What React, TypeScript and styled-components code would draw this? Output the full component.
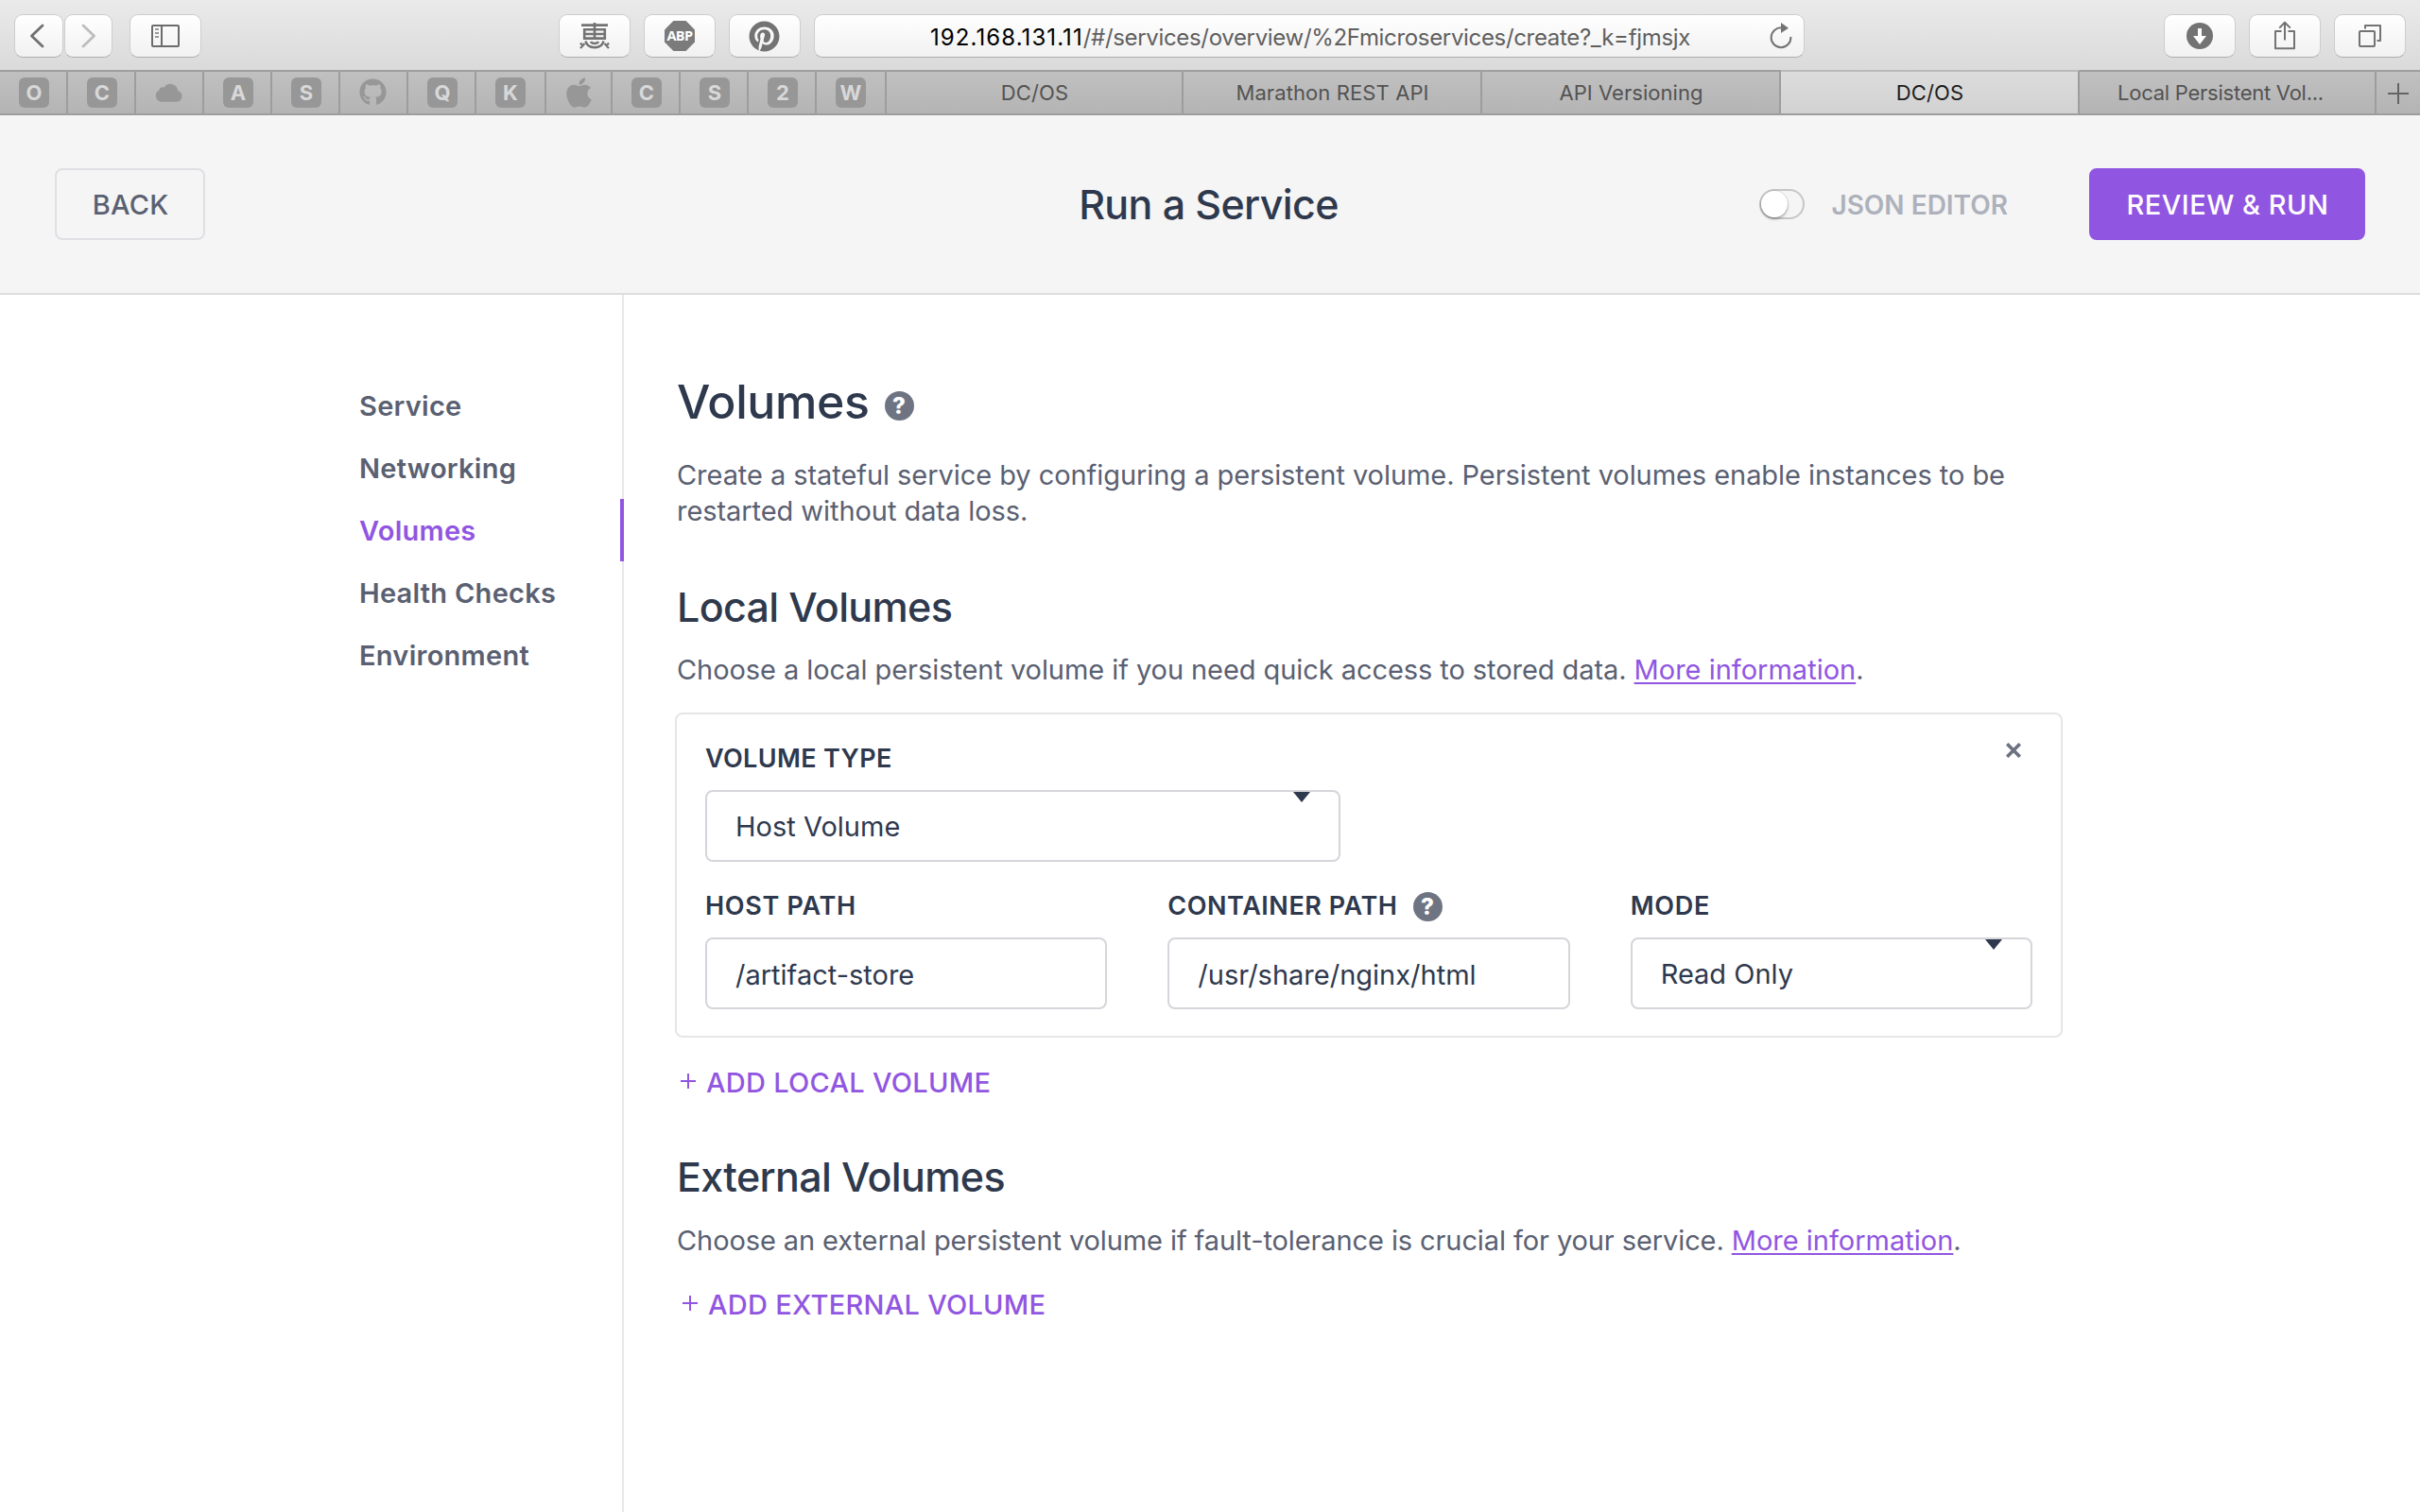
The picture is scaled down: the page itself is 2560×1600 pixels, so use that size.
import React from "react";
import styled, { createGlobalStyle, css } from "styled-components";
import { FaApple, FaGithub, FaPinterest } from "react-icons/fa";

const color = {
  ink: "#2f394d",
  body: "#5a6071",
  purple: "#9156e1",
  muted: "#adb1bb",
  field: "#d5d6db",
  glyph: "#737373",
  pin: "#979797",
};

const GlobalStyle = createGlobalStyle`
  * { box-sizing: border-box; }
  html, body { margin: 0; background: #fff; }
  body { font-family: Inter, "Noto Sans CJK JP", sans-serif; color: ${color.ink}; }
`;

const Window = styled.div`
  display: flex;
  flex-direction: column;
  width: 2560px;
  height: 1600px;
  overflow: hidden;
`;

/* ---------- Browser chrome ---------- */

const Toolbar = styled.div`
  display: flex;
  flex: none;
  height: 74px;
  padding: 15px 15px 0;
  background: linear-gradient(#eaeaea, #dadada);
`;

const ButtonGroup = styled.div<{ $gap: number; $before?: number; $end?: boolean }>`
  display: flex;
  gap: ${(p) => p.$gap}px;
  margin-left: ${(p) => (p.$end ? "auto" : `${p.$before ?? 0}px`)};
`;

const chromeSurface = css`
  height: 46px;
  border: 1px solid #cdcdcd;
  border-bottom-color: #adadad;
  border-radius: 9px;
  background: linear-gradient(#fff, #f1f1f1);
`;

const ChromeButton = styled.button<{ $width?: number; $nudge?: number }>`
  ${chromeSurface}
  display: flex;
  align-items: center;
  justify-content: center;
  width: ${(p) => p.$width ?? 76}px;
  padding: 0 ${(p) => p.$nudge ?? 0}px 0 0;
  color: ${color.glyph};
`;

const AddressBar = styled.div`
  ${chromeSurface}
  display: flex;
  align-items: center;
  justify-content: space-between;
  width: 1048px;
  margin-left: 14px;
  padding: 0 11px 0 122px;
`;

const Url = styled.div`
  padding-top: 3px;
  font-size: 24px;
  line-height: 30px;
  white-space: nowrap;
  letter-spacing: -0.33px;
  color: #5f5f5f;
`;

const Host = styled.span`
  letter-spacing: 1.08px;
  color: #000;
`;

const TabBar = styled.div`
  display: flex;
  flex: none;
  height: 48px;
  border-top: 2px solid #9f9f9f;
  border-bottom: 2px solid #9d9d9d;
  background: linear-gradient(#c0c0c0, #b4b4b4);
`;

const PinnedTab = styled.div<{ $width: number }>`
  display: flex;
  align-items: center;
  width: ${(p) => p.$width}px;
  padding-left: 20px;
  border-right: 2px solid #9d9d9d;
  color: ${color.pin};
`;

const Letter = styled.span`
  display: flex;
  align-items: center;
  justify-content: center;
  width: 32px;
  height: 32px;
  border-radius: 6px;
  background: ${color.pin};
  color: #d8d8d8;
  font-size: 22px;
  font-weight: 700;
  line-height: 32px;
`;

const PinGlyph = styled.span`
  display: flex;
  align-items: center;
  justify-content: center;
  width: 32px;
  height: 32px;
  padding: 0 3px 1px 0;
`;

const Tab = styled.div<{ $width: number; $active?: boolean; $spacing?: number; $clipped?: boolean }>`
  display: flex;
  align-items: center;
  justify-content: center;
  width: ${(p) => p.$width}px;
  padding-left: 1px;
  padding-right: ${(p) => (p.$clipped ? 15 : 0)}px;
  border-right: 2px solid #9d9d9d;
  font-size: 22px;
  letter-spacing: ${(p) => p.$spacing ?? 0.1}px;
  white-space: nowrap;
  color: #535353;
  ${(p) =>
    p.$active &&
    css`
      margin-top: -2px;
      border-top: 2px solid #bababa;
      background: linear-gradient(#dcdcdc, #d2d2d2);
      color: #1c1c1c;
    `}
`;

const NewTab = styled.div`
  display: flex;
  flex: 1;
  align-items: center;
  justify-content: center;
  padding-top: 2px;
`;

/* ---------- Page header ---------- */

const Header = styled.header`
  display: grid;
  flex: none;
  grid-template-columns: 1fr auto 1fr;
  align-items: center;
  height: 190px;
  padding: 0 58px;
  border-bottom: 2px solid #dddddd;
  background: #f5f5f5;
`;

const Title = styled.h1`
  margin: 0;
  padding-right: 3px;
  font-size: 43px;
  font-weight: 500;
  line-height: 52px;
  letter-spacing: -0.63px;
`;

const HeaderActions = styled.div`
  display: flex;
  align-items: center;
  justify-content: flex-end;
`;

const Button = styled.button<{ $primary?: boolean }>`
  width: ${(p) => (p.$primary ? 292 : 159)}px;
  height: 76px;
  padding: 1px 0 0 1px;
  border: 2px solid ${(p) => (p.$primary ? color.purple : "#dfe0e4")};
  border-radius: 8px;
  background: ${(p) => (p.$primary ? color.purple : "transparent")};
  color: ${(p) => (p.$primary ? "#fff" : color.body)};
  font: 500 29px/36px Inter, sans-serif;
  letter-spacing: ${(p) => (p.$primary ? 0.5 : 0.23)}px;
`;

const Toggle = styled.span`
  display: flex;
  width: 48px;
  height: 32px;
  margin-bottom: 1px;
  border: 2px solid #c6c6c6;
  border-radius: 16px;
  background: #f5f5f5;
`;

const Knob = styled.span`
  width: 28px;
  height: 28px;
  border-radius: 50%;
  background: #fff;
  box-shadow: 0 2px 3px rgba(0, 0, 0, 0.28), 0 0 0 1px rgba(0, 0, 0, 0.08);
`;

const ToggleLabel = styled.span`
  margin: 0 86px 0 28px;
  padding-top: 2px;
  color: ${color.muted};
  font-size: 28px;
  font-weight: 600;
  line-height: 36px;
`;

/* ---------- Page body ---------- */

const Body = styled.div`
  display: flex;
  flex: 1;
`;

const Sidebar = styled.nav`
  display: flex;
  flex: none;
  flex-direction: column;
  width: 660px;
  padding-top: 84px;
  border-right: 2px solid #e8e8ea;
`;

const NavItem = styled.a<{ $active?: boolean }>`
  height: 66px;
  margin-right: -2px;
  padding: 1px 0 0 380px;
  border-right: 4px solid ${(p) => (p.$active ? color.purple : "transparent")};
  color: ${(p) => (p.$active ? color.purple : color.body)};
  font-size: 29px;
  font-weight: 600;
  line-height: 65px;
  letter-spacing: 0.27px;
`;

const Content = styled.main`
  width: 1522px;
  padding: 83px 0 0 54px;
`;

const Heading = styled.h1`
  display: flex;
  align-items: center;
  height: 60px;
  margin: 0 0 29px 2px;
  font-size: 50px;
  font-weight: 500;
  letter-spacing: -0.4px;
`;

const Subheading = styled.h2<{ $before: number; $after: number }>`
  margin: ${(p) => p.$before}px 0 ${(p) => p.$after}px 2px;
  font-size: 43px;
  font-weight: 500;
  line-height: 52px;
  letter-spacing: -0.65px;
`;

const Text = styled.p<{ $spacing?: number }>`
  margin: 0 0 0 2px;
  color: ${color.body};
  font-size: 29px;
  line-height: 38px;
  letter-spacing: ${(p) => p.$spacing ?? -0.06}px;
`;

const Link = styled.a`
  color: ${color.purple};
  letter-spacing: 0;
  text-decoration: underline 2px;
  text-underline-offset: 3px;
`;

const Card = styled.section`
  display: flex;
  flex-direction: column;
  gap: 28px;
  height: 344px;
  margin-top: 26px;
  padding: 28px 30px;
  border: 2px solid #e6e6e6;
  border-radius: 8px;
`;

const CardTop = styled.div`
  display: flex;
  align-items: flex-start;
  justify-content: space-between;
`;

const CloseButton = styled.button`
  display: flex;
  margin: 2px 12px 0 0;
  padding: 0;
  border: 0;
  background: none;
`;

const FieldRow = styled.div`
  display: grid;
  grid-template-columns: repeat(3, 1fr);
  column-gap: 64px;
`;

const Field = styled.div<{ $width?: number }>`
  display: flex;
  flex-direction: column;
  gap: 16px;
  width: ${(p) => (p.$width ? `${p.$width}px` : "auto")};
`;

const Label = styled.label<{ $spacing: number }>`
  display: flex;
  align-items: center;
  height: 36px;
  font-size: 27px;
  font-weight: 600;
  letter-spacing: ${(p) => p.$spacing}px;
  white-space: nowrap;
`;

const control = css`
  height: 76px;
  border: 2px solid ${color.field};
  border-radius: 8px;
  background: #fff;
  font-size: 29px;
`;

const Input = styled.div`
  ${control}
  padding: 2px 0 0 30px;
  line-height: 72px;
`;

const Select = styled.div`
  ${control}
  position: relative;
  padding: 1px 0 0 30px;
  line-height: 72px;
`;

const Caret = styled.span`
  position: absolute;
  top: 0;
  right: 30px;
  border: 9px solid transparent;
  border-top: 11px solid ${color.ink};
  border-bottom: 0;
`;

const AddLink = styled.a<{ $before: number; $indent: number }>`
  display: flex;
  align-items: center;
  gap: 11px;
  height: 36px;
  margin-top: ${(p) => p.$before}px;
  padding-left: ${(p) => p.$indent}px;
  color: ${color.purple};
  font-size: 29px;
  font-weight: 500;
  letter-spacing: 0.27px;
`;

const PlusSvg = styled.svg`
  margin-bottom: 2px;
`;

const HelpBadge = styled.span<{ $left: number; $top: number }>`
  display: flex;
  align-items: center;
  justify-content: center;
  width: 31px;
  height: 31px;
  margin: ${(p) => p.$top}px 0 0 ${(p) => p.$left}px;
  border-radius: 50%;
  background: #6f7482;
  color: #fff;
  font-size: 24px;
  font-weight: 800;
  line-height: 31px;
  letter-spacing: 0;
`;

/* ---------- Icons ---------- */

const Chevron = ({ flip, tone }: { flip?: boolean; tone: string }) => (
  <svg width="16" height="26" viewBox="0 0 16 26" fill="none" stroke={tone} strokeWidth="2.8" strokeLinecap="round" strokeLinejoin="round">
    <path d={flip ? "M2 2 L13.5 13 L2 24" : "M14 2 L2.5 13 L14 24"} />
  </svg>
);

const SidebarIcon = () => (
  <svg width="30" height="24" viewBox="0 0 30 24" fill="none" stroke="#6c6c6c" strokeWidth="2">
    <rect x="1" y="1" width="28" height="22" rx="1" />
    <path d="M11 1V23" />
    <path d="M4 5H8M4 9H8M4 13H8" stroke="#9a9a9a" />
  </svg>
);

const BookIcon = () => (
  <svg width="32" height="30" viewBox="0 0 32 30" fill="none" stroke="currentColor" strokeWidth="2.6">
    <path d="M2 3.6H30M16 1V18M5.2 8.2H26.8V17.6H5.2ZM5.2 13H26.8" />
    <path d="M6.5 20.5Q8 27 16 27.2Q24 27 25.5 20.5M12 21Q13 23 16 23Q19 23 20 21" />
    <path d="M1 22.5L3.5 25.5M1 28L5.5 23M31 22.5L28.5 25.5M31 28L26.5 23" strokeWidth="2.2" />
  </svg>
);

const OctagonBadge = styled.span`
  display: flex;
  align-items: center;
  justify-content: center;
  width: 32px;
  height: 32px;
  background: #7b7b7b;
  clip-path: polygon(29.4% 0, 70.6% 0, 100% 29.4%, 100% 70.6%, 70.6% 100%, 29.4% 100%, 0 70.6%, 0 29.4%);
  color: #fff;
  font: 700 14.5px/20px "Open Sans", sans-serif;
  letter-spacing: -0.6px;
`;

const ReloadIcon = () => (
  <svg width="26" height="28" viewBox="0 0 26 28" fill="none" stroke={color.glyph} strokeWidth="2">
    <path d="M14 5.4A10.4 10.4 0 1 0 23.4 15" />
    <path d="M13 0L21 5.7L13 11Z" fill={color.glyph} stroke="none" />
  </svg>
);

const DownloadIcon = () => (
  <svg width="28" height="28" viewBox="0 0 28 28">
    <circle cx="14" cy="14" r="14" fill="currentColor" />
    <path d="M12 6H16V14H21L14 23L7 14H12Z" fill="#fff" />
  </svg>
);

const ShareIcon = () => (
  <svg width="24" height="32" viewBox="0 0 24 32" fill="none" stroke="currentColor" strokeWidth="2">
    <path d="M8.5 11H2V29.2H22V11H15.5M12 1.5V20.5M6.2 7.6L12 1.8L17.8 7.6" strokeLinejoin="round" />
  </svg>
);

const TabsIcon = () => (
  <svg width="26" height="26" viewBox="0 0 26 26" fill="none" stroke="currentColor" strokeWidth="2">
    <rect x="2" y="8" width="16" height="16" rx="1" />
    <path d="M8 5.5V2H24V18H20.5" strokeLinejoin="round" />
  </svg>
);

const CloudIcon = () => (
  <svg width="30" height="20" viewBox="0 0 30 20" fill="currentColor">
    <path d="M7 20A6.8 6.8 0 0 1 4.4 7.3A4.6 4.6 0 0 1 10 4.2A8.2 8.2 0 0 1 25 8.2A6 6 0 0 1 24 20Z" />
  </svg>
);

const Help = ({ left, top }: { left: number; top: number }) => (
  <HelpBadge $left={left} $top={top}>?</HelpBadge>
);

const Plus = () => (
  <PlusSvg width="16" height="16" viewBox="0 0 16 16" stroke="currentColor" strokeWidth="2">
    <path d="M8 0V16M0 8H16" />
  </PlusSvg>
);

/* ---------- Data ---------- */

const pins: { width: number; letter?: string; icon?: React.ReactNode }[] = [
  { width: 72, letter: "O" },
  { width: 72, letter: "C" },
  { width: 72, icon: <CloudIcon /> },
  { width: 72, letter: "A" },
  { width: 72, letter: "S" },
  { width: 72, icon: <FaGithub size={29} /> },
  { width: 72, letter: "Q" },
  { width: 74, letter: "K" },
  { width: 70, icon: <FaApple size={36} /> },
  { width: 72, letter: "C" },
  { width: 72, letter: "S" },
  { width: 72, letter: "2" },
  { width: 74, letter: "W" },
];

const tabs = [
  { title: "DC/OS", width: 314 },
  { title: "Marathon REST API", width: 316 },
  { title: "API Versioning", width: 316, spacing: 0.05 },
  { title: "DC/OS", width: 316, active: true },
  { title: "Local Persistent Vol...", width: 314, spacing: -0.25, clipped: true },
];

const sections = ["Service", "Networking", "Volumes", "Health Checks", "Environment"];

export default function App() {
  return (
    <Window>
      <GlobalStyle />
      <Toolbar>
        <ButtonGroup $gap={1}>
          <ChromeButton $width={52} $nudge={4}><Chevron tone="#707070" /></ChromeButton>
          <ChromeButton $width={51}><Chevron tone="#bdbdbd" flip /></ChromeButton>
        </ButtonGroup>
        <ButtonGroup $gap={0} $before={18}>
          <ChromeButton><SidebarIcon /></ChromeButton>
        </ButtonGroup>
        <ButtonGroup $gap={14} $before={378}>
          <ChromeButton><BookIcon /></ChromeButton>
          <ChromeButton><OctagonBadge>ABP</OctagonBadge></ChromeButton>
          <ChromeButton $nudge={1}><FaPinterest size={33} /></ChromeButton>
        </ButtonGroup>
        <AddressBar>
          <Url>
            <Host>192.168.131.11</Host>/#/services/overview/%2Fmicroservices/create?_k=fjmsjx
          </Url>
          <ReloadIcon />
        </AddressBar>
        <ButtonGroup $gap={14} $end>
          <ChromeButton><DownloadIcon /></ChromeButton>
          <ChromeButton><ShareIcon /></ChromeButton>
          <ChromeButton><TabsIcon /></ChromeButton>
        </ButtonGroup>
      </Toolbar>
      <TabBar>
        {pins.map((pin, i) => (
          <PinnedTab key={i} $width={pin.width}>
            {pin.letter ? <Letter>{pin.letter}</Letter> : <PinGlyph>{pin.icon}</PinGlyph>}
          </PinnedTab>
        ))}
        {tabs.map((tab, i) => (
          <Tab key={i} $width={tab.width} $active={tab.active} $spacing={tab.spacing} $clipped={tab.clipped}>
            {tab.title}
          </Tab>
        ))}
        <NewTab>
          <svg width="22" height="22" viewBox="0 0 22 22" stroke="#646464" strokeWidth="2">
            <path d="M11 0V22M0 11H22" />
          </svg>
        </NewTab>
      </TabBar>

      <Header>
        <div>
          <Button>BACK</Button>
        </div>
        <Title>Run a Service</Title>
        <HeaderActions>
          <Toggle><Knob /></Toggle>
          <ToggleLabel>JSON EDITOR</ToggleLabel>
          <Button $primary>REVIEW &amp; RUN</Button>
        </HeaderActions>
      </Header>

      <Body>
        <Sidebar>
          {sections.map((name) => (
            <NavItem key={name} $active={name === "Volumes"}>{name}</NavItem>
          ))}
        </Sidebar>
        <Content>
          <Heading>
            Volumes
            <Help left={16} top={9} />
          </Heading>
          <Text>
            Create a stateful service by configuring a persistent volume. Persistent volumes enable instances to be
            restarted without data loss.
          </Text>

          <Subheading $before={56} $after={22}>Local Volumes</Subheading>
          <Text $spacing={-0.07}>
            Choose a local persistent volume if you need quick access to stored data. <Link>More information</Link>.
          </Text>
          <Card>
            <CardTop>
              <Field $width={672}>
                <Label $spacing={0.35}>VOLUME TYPE</Label>
                <Select>Host Volume<Caret /></Select>
              </Field>
              <CloseButton>
                <svg width="16" height="16" viewBox="0 0 16 16" stroke="#6d7280" strokeWidth="3.6">
                  <path d="M1.2 1.2L14.8 14.8M14.8 1.2L1.2 14.8" />
                </svg>
              </CloseButton>
            </CardTop>
            <FieldRow>
              <Field>
                <Label $spacing={0.7}>HOST PATH</Label>
                <Input>/artifact-store</Input>
              </Field>
              <Field>
                <Label $spacing={0.55}>CONTAINER PATH<Help left={16} top={3} /></Label>
                <Input>/usr/share/nginx/html</Input>
              </Field>
              <Field>
                <Label $spacing={0.7}>MODE</Label>
                <Select>Read Only<Caret /></Select>
              </Field>
            </FieldRow>
          </Card>
          <AddLink $before={29} $indent={6}><Plus />ADD LOCAL VOLUME</AddLink>

          <Subheading $before={56} $after={23}>External Volumes</Subheading>
          <Text $spacing={-0.1}>
            Choose an external persistent volume if fault-tolerance is crucial for your service. <Link>More information</Link>.
          </Text>
          <AddLink $before={30} $indent={8}><Plus />ADD EXTERNAL VOLUME</AddLink>
        </Content>
      </Body>
    </Window>
  );
}
